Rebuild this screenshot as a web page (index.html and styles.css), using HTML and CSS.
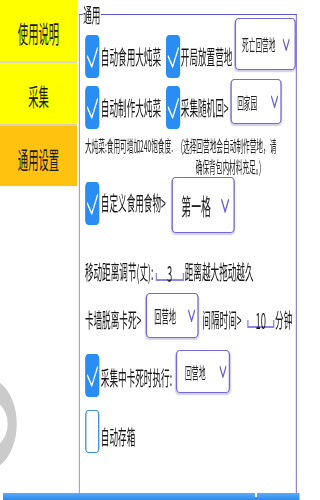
FILE: index.html
```html
<!DOCTYPE html>
<html lang="zh-CN">
<head>
<meta charset="utf-8">
<title>通用设置</title>
<link rel="stylesheet" href="styles.css">
</head>
<body>
<div class="screen">
  <div class="main">
    <aside class="sidebar">
      <div class="tab tab-first">使用说明</div>
      <div class="tab tab-second">采集</div>
      <div class="tab tab-active">通用设置</div>
      <svg class="ring" viewBox="0 0 40 94" aria-hidden="true">
        <path d="M0,5.7 A72,46.5 0 0 1 0,88.3 L0,66.4 A51,25.5 0 0 0 0,27.6 Z" fill="#cbcbcb"/>
      </svg>
    </aside>

    <fieldset class="group">
      <legend>通用</legend>

      <div class="row row-1">
        <span class="check on"><svg viewBox="0 0 33 43"><polyline points="5.4,21.7 15.4,31.7 28.7,13.3"/></svg></span>
        <span class="label l-1 gap-s">自动食用大炖菜</span>
        <span class="check on c-2"><svg viewBox="0 0 33 43"><polyline points="5.4,21.7 15.4,31.7 28.7,13.3"/></svg></span>
        <span class="label l-1 gap-xs">开局放置营地</span>
        <span class="select sel-1"><span>死亡回营地</span><svg class="chev" viewBox="0 0 17 13"><polyline points="1,1 8.5,12 16,1"/></svg></span>
      </div>

      <div class="row row-2">
        <span class="check on"><svg viewBox="0 0 33 43"><polyline points="5.4,21.7 15.4,31.7 28.7,13.3"/></svg></span>
        <span class="label l-2 gap-s">自动制作大炖菜</span>
        <span class="check on c-2"><svg viewBox="0 0 33 43"><polyline points="5.4,21.7 15.4,31.7 28.7,13.3"/></svg></span>
        <span class="label l-2 gap-xs">采集随机回&gt;</span>
        <span class="select sel-2"><span>回家园</span><svg class="chev" viewBox="0 0 17 13"><polyline points="1,1 8.5,12 16,1"/></svg></span>
      </div>

      <div class="note">
        <span class="note-left">大炖菜:食用可增加240饱食度.</span>
        <span class="note-right">(选择回营地会自动制作营地，请<br>确保背包内材料充足。)</span>
      </div>

      <div class="row row-4">
        <span class="check on"><svg viewBox="0 0 33 43"><polyline points="5.4,21.7 15.4,31.7 28.7,13.3"/></svg></span>
        <span class="label l-4 gap-s">自定义食用食物&gt;</span>
        <span class="select sel-4"><span>第一格</span><svg class="chev chev-lg" viewBox="0 0 17 13"><polyline points="1,1 8.5,12 16,1"/></svg></span>
      </div>

      <div class="row row-5">
        <span class="label l-5">移动距离调节(丈):</span>
        <span class="field field-1">3</span>
        <span class="label l-5 gap-xs">距离越大拖动越久</span>
      </div>

      <div class="row row-6">
        <span class="label l-6">卡墙脱离卡死&gt;</span>
        <span class="select sel-6"><span>回营地</span><svg class="chev" viewBox="0 0 17 13"><polyline points="1,1 8.5,12 16,1"/></svg></span>
        <span class="label l-6 gap-m">间隔时间&gt;</span>
        <span class="field field-2">10</span>
        <span class="label l-6 gap-xs">分钟</span>
      </div>

      <div class="row row-7">
        <span class="check on"><svg viewBox="0 0 33 43"><polyline points="5.4,21.7 15.4,31.7 28.7,13.3"/></svg></span>
        <span class="label l-7 gap-s">采集中卡死时执行:</span>
        <span class="select sel-7"><span>回营地</span><svg class="chev" viewBox="0 0 17 13"><polyline points="1,1 8.5,12 16,1"/></svg></span>
      </div>

      <div class="row row-8">
        <span class="check off"></span>
        <span class="label l-8 gap-s">自动存箱</span>
      </div>
    </fieldset>
  </div>
  <div class="bottom-bar"></div>
</div>
</body>
</html>
```

FILE: styles.css
```css
* { box-sizing: border-box; }
html, body { margin: 0; padding: 0; background: #fff; overflow: hidden; }
body {
  width: 300px;
  height: 500px;
  font-family: "Noto Sans CJK SC", "Noto Sans", sans-serif;
  color: #161616;
}

/* the app UI is rendered horizontally condensed */
.screen {
  width: 697px;
  height: 500px;
  display: flex;
  flex-direction: column;
  overflow: hidden;
  transform: scaleX(0.43);
  transform-origin: 0 0;
}
.main { display: flex; height: 493px; }

/* ---------- sidebar ---------- */
.sidebar { width: 179px; flex: none; display: flex; flex-direction: column; }
.tab {
  display: flex;
  align-items: center;
  justify-content: center;
  padding-top: 4px;
  font-size: 24px;
  color: #1c1c1c;
}
.tab-first { height: 61px; background: #ffff00; }
.tab-second { height: 63px; background: #ffff00; border-top: 2px solid #dcd8c2; }
.tab-active { height: 62px; background: #ffc30f; border-top: 2px solid #d8d0b8; }
.ring { width: 40px; height: 94px; margin-top: 191px; display: block; }

/* ---------- group box ---------- */
.group {
  margin: 4.5px 0 0 4px;
  width: 507px;
  height: 488.5px;
  min-width: 0;
  border-style: solid;
  border-color: #5b55d6;
  border-width: 1.5px 2.5px 0 2.5px;
  padding: 0 0 0 12.5px;
}
.group legend {
  font-size: 20px;
  line-height: 20px;
  padding: 0 1px;
  margin-left: -5px;
  color: #161616;
}

.row { display: flex; align-items: flex-start; white-space: nowrap; }
.label { font-size: 20px; flex: none; }
.gap-xs { margin-left: 2px; }
.gap-s { margin-left: 4px; }
.gap-m { margin-left: 9px; }

/* checkbox */
.check {
  width: 33px;
  height: 43px;
  flex: none;
  display: block;
  border-radius: 7px / 5px;
}
.check.on { background: #2a8df3; }
.check.on svg { display: block; width: 33px; height: 43px; }
.check.on polyline { fill: none; stroke: #fff; stroke-width: 2.6; stroke-linecap: round; stroke-linejoin: round; }
.check.off { background: #fff; border: solid #3d8fe6; border-width: 1.5px 3.5px; }
.c-2 { margin-left: 11px; }

/* dropdown */
.select {
  display: flex;
  align-items: center;
  justify-content: space-between;
  flex: none;
  background: #fff;
  border: solid #7368dc;
  border-width: 1.5px 3px;
  border-radius: 9px / 5px;
  box-shadow: 0 1.5px 2px rgba(70, 60, 150, 0.25);
  color: #222;
}
.chev { width: 17px; height: 13px; flex: none; }
.chev-lg { width: 19px; height: 17px; }
.chev polyline { fill: none; stroke: #6a5ed8; stroke-width: 2.4; stroke-linejoin: round; }

/* underline input */
.field {
  display: block;
  flex: none;
  text-align: center;
  font-size: 22px;
  color: #222;
  border-bottom: 2px solid #8b86e8;
  background:
    linear-gradient(#8b86e8, #8b86e8) left bottom / 3px 6px no-repeat,
    linear-gradient(#8b86e8, #8b86e8) right bottom / 3px 6px no-repeat;
}

/* row 1 */
.row-1 { margin-top: -6.5px; }
.row-1 .check, .l-1 { margin-top: 17px; }
.l-1 { line-height: 43px; }
.sel-1 { margin-left: 5.5px; width: 142px; height: 52px; padding: 0 11px 0 14px; font-size: 15.5px; }

/* row 2 */
.row-2 { margin-top: 1px; }
.row-2 .check, .l-2 { margin-top: 7px; }
.l-2 { line-height: 43px; }
.sel-2 { margin-left: 4px; width: 119px; height: 45px; padding: 0 5px 0 13px; font-size: 15.5px; }

/* note */
.note { display: flex; margin-top: 6px; font-size: 15.5px; line-height: 21px; color: #1e1e1e; white-space: nowrap; }
.note-left { width: 221px; flex: none; }
.note-right { width: 226px; flex: none; text-align: center; }

/* row 4 */
.row-4 .check { margin-top: 4.5px; }
.l-4 { margin-top: 4px; line-height: 43px; }
.sel-4 { margin-left: 13px; width: 147px; height: 56px; padding: 0 10px 0 20px; font-size: 23px; }

/* row 5 */
.row-5 { margin-top: 24px; }
.l-5 { line-height: 30px; }
.field-1 { margin-left: 5px; width: 66px; height: 24px; line-height: 30px; }

/* row 6 */
.row-6 { margin-top: 6px; }
.l-6 { margin-top: 4px; line-height: 45px; }
.sel-6 { margin-left: 10px; width: 123px; height: 45px; padding: 0 5px 0 17px; font-size: 17px; }
.field-2 { margin-left: 13px; margin-top: 4px; width: 63px; height: 31px; line-height: 45px; }

/* row 7 */
.row-7 { margin-top: 8px; }
.row-7 .check { margin-top: 3.5px; }
.l-7 { margin-top: 5.5px; line-height: 43px; }
.sel-7 { margin-left: 9px; width: 126px; height: 43px; padding: 0 5px 0 18px; font-size: 16px; }

/* row 8 */
.row-8 { margin-top: 11.5px; }
.l-8 { margin-top: 5px; line-height: 43px; }

/* bottom bar */
.bottom-bar {
  height: 7px;
  margin-left: 7px;
  background:
    linear-gradient(to right, transparent 586px, #fff 586px, #fff 590px, transparent 590px) top / 100% 4px no-repeat,
    linear-gradient(#5eabf7, #2a8bef);
}
```
